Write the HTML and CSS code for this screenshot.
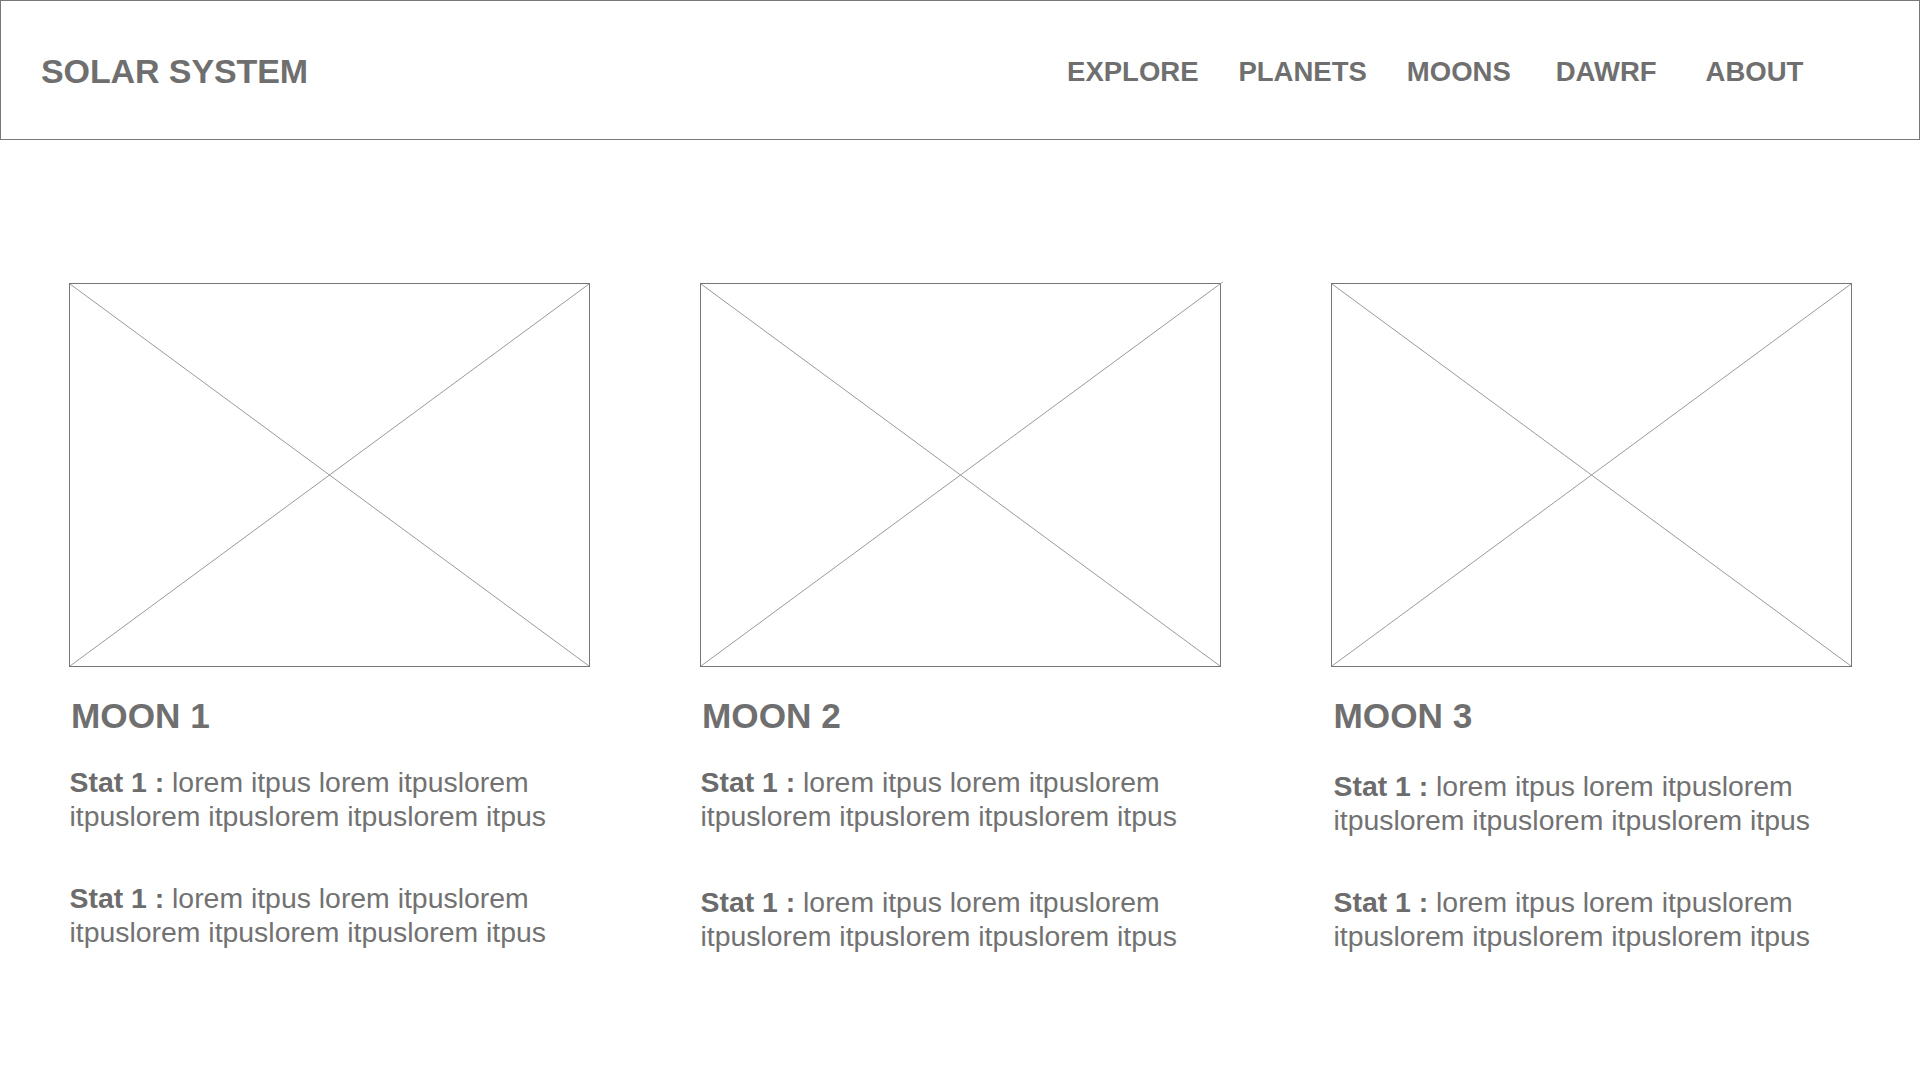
FILE: index.html
```html
<!DOCTYPE html>
<html lang="en">
<head>
<meta charset="utf-8">
<title>Solar System</title>
<link rel="stylesheet" href="styles.css">
</head>
<body>
<header class="site-header">
  <div class="brand">SOLAR SYSTEM</div>
  <nav class="nav">
    <a class="nav-item" href="#">EXPLORE</a>
    <a class="nav-item" href="#">PLANETS</a>
    <a class="nav-item" href="#">MOONS</a>
    <a class="nav-item nav-wide" href="#">DAWRF</a>
    <a class="nav-item nav-wider" href="#">ABOUT</a>
  </nav>
</header>

<main class="cards">
  <section class="card">
    <div class="placeholder">
      <svg class="ph-x" viewBox="0 0 100 100" preserveAspectRatio="none">
        <line x1="0" y1="0" x2="100" y2="100"/>
        <line x1="100" y1="0" x2="0" y2="100"/>
      </svg>
    </div>
    <h2 class="card-title">MOON 1</h2>
    <p class="stat"><b>Stat 1 :</b> lorem itpus lorem itpuslorem itpuslorem itpuslorem itpuslorem itpus</p>
    <p class="stat stat-next"><b>Stat 1 :</b> lorem itpus lorem itpuslorem itpuslorem itpuslorem itpuslorem itpus</p>
  </section>

  <section class="card">
    <div class="placeholder">
      <svg class="ph-x" viewBox="0 0 100 100" preserveAspectRatio="none">
        <line x1="0" y1="0" x2="100" y2="100"/>
        <line x1="100.5" y1="-0.5" x2="0" y2="100"/>
      </svg>
    </div>
    <h2 class="card-title">MOON 2</h2>
    <p class="stat"><b>Stat 1 :</b> lorem itpus lorem itpuslorem itpuslorem itpuslorem itpuslorem itpus</p>
    <p class="stat stat-next nudge"><b>Stat 1 :</b> lorem itpus lorem itpuslorem itpuslorem itpuslorem itpuslorem itpus</p>
  </section>

  <section class="card card-last">
    <div class="placeholder">
      <svg class="ph-x" viewBox="0 0 100 100" preserveAspectRatio="none">
        <line x1="0" y1="0" x2="100" y2="100"/>
        <line x1="100" y1="0" x2="0" y2="100"/>
      </svg>
    </div>
    <h2 class="card-title">MOON 3</h2>
    <p class="stat nudge"><b>Stat 1 :</b> lorem itpus lorem itpuslorem itpuslorem itpuslorem itpuslorem itpus</p>
    <p class="stat stat-next"><b>Stat 1 :</b> lorem itpus lorem itpuslorem itpuslorem itpuslorem itpuslorem itpus</p>
  </section>
</main>
</body>
</html>
```

FILE: styles.css
```css
* { box-sizing: border-box; }

html, body {
  margin: 0;
  padding: 0;
  background: #ffffff;
}

body {
  font-family: "Liberation Sans", Arial, Helvetica, sans-serif;
  color: #6f6f6f;
  width: 1920px;
}

.site-header {
  height: 140px;
  border: 1px solid #777777;
  display: flex;
  align-items: center;
  padding-left: 40px;
}

.brand {
  font-size: 34px;
  font-weight: 700;
  color: #6f6f6f;
  letter-spacing: -0.1px;
  padding-top: 2px;
}

.nav {
  display: flex;
  align-items: center;
  margin-left: 759px;
  gap: 40px;
  padding-top: 3px;
}

.nav-item {
  font-size: 27.5px;
  font-weight: 700;
  color: #6f6f6f;
  text-decoration: none;
}

.nav-wide { margin-left: 5px; }
.nav-wider { margin-left: 9px; }

.cards {
  display: grid;
  grid-template-columns: repeat(3, 521px);
  column-gap: 110px;
  padding: 143px 69px 0 69px;
}

.card {
  display: flex;
  flex-direction: column;
}

.placeholder {
  width: 521px;
  height: 384px;
  border: 1px solid #767676;
}

.ph-x {
  display: block;
  width: 100%;
  height: 100%;
  overflow: visible;
}

.ph-x line {
  stroke: #9a9a9a;
  stroke-width: 1;
  vector-effect: non-scaling-stroke;
}

.card-title {
  margin: 29px 0 0 0;
  padding-left: 2px;
  font-size: 35.2px;
  line-height: 39px;
  font-weight: 700;
  color: #6f6f6f;
}

.stat {
  margin: 30px 0 0 0;
  padding-left: 0.5px;
  font-size: 28.4px;
  line-height: 34.3px;
  color: #727272;
}

.card-last .card-title,
.card-last .stat { padding-left: 2.5px; }

.stat b {
  color: #6c6c6c;
  font-weight: 700;
}

.stat-next { margin-top: 47px; }
.stat.nudge { margin-top: 34px; }
.stat-next.nudge { margin-top: 51px; }
```
